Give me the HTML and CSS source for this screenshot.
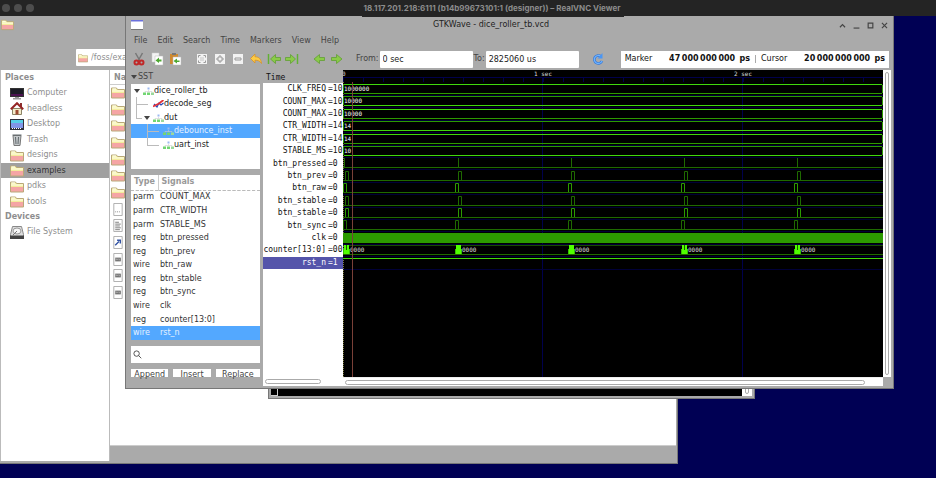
FILE: index.html
```html
<!DOCTYPE html>
<html lang="en">
<head>
<meta charset="utf-8">
<title>18.117.201.218:6111 (b14b99673101:1 (designer)) – RealVNC Viewer</title>
<link rel="stylesheet" href="styles.css">
</head>
<body>
<svg class="defs" aria-hidden="true">
  <defs>
    <linearGradient id="foldFill" x1="0" y1="0" x2="0" y2="1"><stop offset=".2" stop-color="#f6f3a0"/><stop offset=".45" stop-color="#f4ec9c"/><stop offset=".55" stop-color="#f5a5a5"/><stop offset="1" stop-color="#f5a5a5"/></linearGradient>
    <symbol id="folder" viewBox="0 0 14 12"><path d="M.5 1.500h5l1 1.500h7v8.500h-13z" fill="url(#foldFill)" stroke="#b9a878"/><path d="M1.500 2.500h3.500" stroke="#fff"/><path d="M1 4.500h12" stroke="#fffef0"/></symbol>
    <symbol id="computer" viewBox="0 0 14 13"><path d="M0 1h14v9H0z" fill="#333"/><path d="M1 2h12v5H1z" fill="#1c1c26"/><path d="M1 7h12v2H1z" fill="#4b1350"/><path d="M5 10h4v1h2v1.500H3V11h2z" fill="#999"/></symbol>
    <symbol id="home" viewBox="0 0 14 13"><path d="M2.500 6.500h9v6h-9z" fill="#f3eccb" stroke="#8c8466"/><path d="M10 1h2v4h-2z" fill="#8c3030"/><path d="M.8 7.200 7 1.200l6.200 6" fill="none" stroke="#952525" stroke-width="2"/><path d="M5.500 8h3v4.500h-3z" fill="#9c4a32"/></symbol>
    <symbol id="desk" viewBox="0 0 14 13"><path d="M0 1h14v11H0z" fill="#30303c"/><path d="M1 2h12v5H1z" fill="#58d0e8"/><path d="M1 5h12v5H1z" fill="#8296e8"/><path d="M2 10.500h10" stroke="#fff" stroke-dasharray="1 1"/></symbol>
    <symbol id="trash" viewBox="0 0 14 13"><path d="M3 2.500h8l-1 10H4z" fill="#c4c8ca" stroke="#777"/><path d="M2.500 2h9M5.500 4l.5 7M8.500 4 8 11" stroke="#60686c" fill="none"/></symbol>
    <symbol id="drive" viewBox="0 0 14 13"><path d="M2.500.5h9l2 8v4H.5v-4z" fill="#ddd" stroke="#888"/><path d="M0 9.500h14V13H0z" fill="#444"/><ellipse cx="7" cy="5" rx="4" ry="3" fill="#f8f8f8" stroke="#999"/><path d="M7 5 3 9" stroke="#777"/></symbol>
    <symbol id="hier" viewBox="0 0 11 8"><path d="M4.500.5h2v2h-2z" fill="#9bb8f0"/><path d="M5.500 3v1.500M2 5.500V4.500h7v1" stroke="#ccc" fill="none" stroke-width=".6"/><path d="M0 5.500h3V8H0zM4 5.500h3V8H4z" fill="#72d672"/><path d="M8 5.500h3V8H8z" fill="#9bd89b"/></symbol>
    <symbol id="fn" viewBox="0 0 11 8"><path d="M1 4l3 3 2-4 2 2 2.500-2" fill="none" stroke="#2848b8" stroke-width="1.200"/><path d="M0 6.500 3 5l3-1.500L10.500 0" fill="none" stroke="#e03038" stroke-width="1.800"/></symbol>
    <symbol id="arrowR" viewBox="0 0 14 12"><path d="M1.500 4.500h5V1.500L12 6l-5.500 4.500v-3h-5z" fill="#8acb48" stroke="#62a034" stroke-width=".8"/></symbol>
    <symbol id="arrowEnd" viewBox="0 0 14 12"><path d="M.5 4.500h5V1.500l5 4.500-5 4.500v-3h-5z" fill="#8acb48" stroke="#62a034" stroke-width=".8"/><path d="M12.500 1v10" stroke="#62b034" stroke-width="1.500"/></symbol>
  </defs>
</svg>

<header class="viewer-bar">
  <span class="dots"><i></i><i></i><i></i></span>
  <h1>18.117.201.218:6111 (b14b99673101:1 (designer)) – RealVNC Viewer</h1>
</header>

<main class="desktop">
  <section class="win files" aria-label="File manager">
    <div class="files-head">
      <svg class="ic-folder"><use href="#folder"/></svg>
      <label class="path"><svg class="ic-path"><use href="#folder"/></svg><input type="text" value="/foss/examples" aria-label="Path"></label>
    </div>
    <div class="files-body">
      <nav class="places">
        <h2>Places</h2>
        <a href="#"><svg><use href="#computer"/></svg>Computer</a>
        <a href="#"><svg><use href="#home"/></svg>headless</a>
        <a href="#"><svg><use href="#desk"/></svg>Desktop</a>
        <a href="#"><svg><use href="#trash"/></svg>Trash</a>
        <a href="#"><svg><use href="#folder"/></svg>designs</a>
        <a href="#" class="current"><svg><use href="#folder"/></svg>examples</a>
        <a href="#"><svg><use href="#folder"/></svg>pdks</a>
        <a href="#"><svg><use href="#folder"/></svg>tools</a>
        <h2>Devices</h2>
        <a href="#"><svg><use href="#drive"/></svg>File System</a>
      </nav>
      <div class="listing">
        <div class="listing-head">Na</div>
        <div class="listing-items">
          <svg><use href="#folder"/></svg>
          <svg><use href="#folder"/></svg>
          <svg><use href="#folder"/></svg>
          <svg><use href="#folder"/></svg>
          <svg><use href="#folder"/></svg>
          <svg><use href="#folder"/></svg>
          <svg><use href="#folder"/></svg>
          <svg viewBox="0 0 14 14"><path d="M2.500.5h9v13h-9z" class="page"/><path d="M4 9.500h6" stroke="#888" stroke-dasharray="1 1"/></svg>
          <svg viewBox="0 0 14 14"><path d="M2.500.5h9v13h-9z" class="page"/><path d="M4 3.500h4M4 5.500h6M4 7.500h5M4 9.500h6M4 11.500h5" stroke="#777"/></svg>
          <svg viewBox="0 0 14 14"><path d="M2.500.5h9v13h-9z" class="page"/><path d="M4 10l4-4M6 4.500h3.500V8" stroke="#3454a4" stroke-width="1.500" fill="none"/></svg>
          <svg viewBox="0 0 14 14"><path d="M2.500.5h9v13h-9z" class="page"/><path d="M4 5h6v4H4z" fill="#666"/><path d="M5 8V6l1 1 1-1v2M8.500 6v2" stroke="#ddd" fill="none" stroke-width=".6"/></svg>
          <svg viewBox="0 0 14 14"><path d="M2.500.5h9v13h-9z" class="page"/><path d="M4 5h6v4H4z" fill="#666"/><path d="M5 8V6l1 1 1-1v2M8.500 6v2" stroke="#ddd" fill="none" stroke-width=".6"/></svg>
          <svg viewBox="0 0 14 14"><path d="M2.500.5h9v13h-9z" class="page"/><path d="M4 5h6v4H4z" fill="#666"/><path d="M5 8V6l1 1 1-1v2M8.500 6v2" stroke="#ddd" fill="none" stroke-width=".6"/></svg>
        </div>
      </div>
    </div>
  </section>

  <section class="win terminal" aria-label="Terminal"><span class="cursor"></span><span class="term-scroll"><i></i></span></section>

  <section class="win wave" aria-label="GTKWave">
    <div class="titlebar">
      <svg class="ic-app" viewBox="0 0 12 10"><path d="M0 0h12v10H0z" fill="#fff"/><path d="M0 0h12v1.500H0z" fill="#6a70dc"/><path d="M0 9.500h12" stroke="#777"/></svg>
      <h2>GTKWave - dice_roller_tb.vcd</h2>
      <span class="controls">
        <button aria-label="Shade"><svg viewBox="0 0 6 6"><path d="M.8 4.500 3 2.200l2.200 2.300"/></svg></button>
        <button aria-label="Minimize"><svg viewBox="0 0 6 6"><path d="M.5 5.200h5"/></svg></button>
        <button aria-label="Maximize"><svg viewBox="0 0 6 6"><path d="M1 1h4v4H1z"/></svg></button>
        <button aria-label="Close"><svg viewBox="0 0 6 6"><path d="m.8.8 4.400 4.400m0-4.400L.8 5.200"/></svg></button>
      </span>
    </div>
    <nav class="menubar"><button>File</button><button>Edit</button><button>Search</button><button>Time</button><button>Markers</button><button>View</button><button>Help</button></nav>
    <div class="toolbar">
      <div class="tools">
        <button aria-label="Cut"><svg viewBox="0 0 14 14"><path d="M3.500 1 8 9M10.500 1 6 9" stroke="#777" stroke-width="1.500"/><circle cx="4.500" cy="10.500" r="2" class="blade"/><circle cx="9.500" cy="10.500" r="2" class="blade"/></svg></button>
        <button aria-label="Copy"><svg viewBox="0 0 14 14"><path d="M2 1h7v9H2z" fill="#f4f4f4" stroke="#ccc" stroke-width=".5"/><path d="M5 4h8v9H5z" fill="#fff" stroke="#bbb" stroke-width=".5"/><path d="M11.500 7.500H9V5.500L5.500 8.500 9 11V9.500h2.500z" fill="#4ea832"/></svg></button>
        <button aria-label="Paste"><svg viewBox="0 0 14 14"><path d="M2 2h8v10H2z" fill="#cf8a30"/><path d="M4 1h4v2H4z" fill="#777"/><path d="M5 5h8v8H5z" fill="#fff" stroke="#bbb" stroke-width=".5"/><path d="M11.500 8.500H9v-2L5.500 9 9 11.500v-1.500h2.500z" fill="#4ea832"/></svg></button>
      </div>
      <div class="tools">
        <button aria-label="Zoom fit"><svg viewBox="0 0 14 14"><path d="M2 2h10v10H2z" fill="#f2f2f2"/><path d="M3.500 5.500v-2h2M8.500 3.500h2v2M10.500 8.500v2h-2M5.500 10.500h-2v-2" class="dash"/><path d="M5.500 6h1M7.500 6h1M5.500 8h1M7.500 8h1" class="dash"/></svg></button>
        <button aria-label="Zoom in"><svg viewBox="0 0 14 14"><path d="M2 2h10v10H2z" fill="#f2f2f2"/><path d="M6 4h2v2h2v2H8v2H6V8H4V6h2z" class="dash"/></svg></button>
        <button aria-label="Zoom out"><svg viewBox="0 0 14 14"><path d="M2 2h10v10H2z" fill="#f2f2f2"/><path d="M4 6h6v2H4z" class="dash"/></svg></button>
        <button aria-label="Undo zoom"><svg viewBox="0 0 14 14"><path d="M1.500 6.500 6 2v2.800c4 0 6 2 6.500 6.700C11 9 9 8.200 6 8.200V11z" fill="#fccb45" stroke="#d8922a" stroke-width=".8"/></svg></button>
        <button aria-label="To start"><svg class="flip"><use href="#arrowEnd"/></svg></button>
        <button aria-label="To end"><svg><use href="#arrowEnd"/></svg></button>
      </div>
      <div class="tools">
        <button aria-label="Previous edge"><svg class="flip"><use href="#arrowR"/></svg></button>
        <button aria-label="Next edge"><svg><use href="#arrowR"/></svg></button>
      </div>
      <div class="range">
        <label for="from">From:</label><input id="from" type="text" value="0 sec">
        <label for="to">To:</label><input id="to" type="text" value="2825060 us">
      </div>
      <button class="reload" aria-label="Reload"><svg viewBox="0 0 14 14"><path d="M10 4.500A4 4 0 1 0 11 9" fill="none" stroke="#3578d8" stroke-width="2.600"/><path d="M10 4.500A4 4 0 1 0 11 9" fill="none" stroke="#70b4ff" stroke-width="1.200"/><path d="M11.500 1v5.500H6.500z" fill="#4a96f4"/></svg></button>
      <div class="readout"><span>Marker</span><b>47&#8201;000&#8201;000&#8201;000 &#8201;ps</b><i></i><span>Cursor</span><b>20&#8201;000&#8201;000&#8201;000 &#8201;ps</b></div>
    </div>

    <div class="panes">
      <aside class="side">
        <div class="sst"><span class="tri"></span>SST</div>
        <ul class="tree">
          <li><span class="tri"></span><svg><use href="#hier"/></svg>dice_roller_tb</li>
          <li class="d1 leaf"><svg><use href="#fn"/></svg>decode_seg</li>
          <li class="d1 open"><span class="tri"></span><svg><use href="#hier"/></svg>dut</li>
          <li class="d2 leaf selected"><svg><use href="#hier"/></svg>debounce_inst</li>
          <li class="d2 leaf last"><svg><use href="#hier"/></svg>uart_inst</li>
        </ul>
        <table class="signals">
          <thead><tr><th>Type</th><th>Signals</th></tr></thead>
          <tbody>
            <tr><td>parm</td><td>COUNT_MAX</td></tr>
            <tr><td>parm</td><td>CTR_WIDTH</td></tr>
            <tr><td>parm</td><td>STABLE_MS</td></tr>
            <tr><td>reg</td><td>btn_pressed</td></tr>
            <tr><td>reg</td><td>btn_prev</td></tr>
            <tr><td>wire</td><td>btn_raw</td></tr>
            <tr><td>reg</td><td>btn_stable</td></tr>
            <tr><td>reg</td><td>btn_sync</td></tr>
            <tr><td>wire</td><td>clk</td></tr>
            <tr><td>reg</td><td>counter[13:0]</td></tr>
            <tr class="selected"><td>wire</td><td>rst_n</td></tr>
          </tbody>
        </table>
        <label class="search"><svg viewBox="0 0 10 10"><circle cx="4" cy="4" r="3"/><path d="m6.200 6.200 3 3"/></svg><input type="text" aria-label="Filter signals"></label>
        <div class="actions"><button>Append</button><button>Insert</button><button>Replace</button></div>
      </aside>

      <div class="names">
        <div class="names-head">Time</div>
        <ol>
          <li><span>CLK_FREQ</span><span>=10</span></li>
          <li><span>COUNT_MAX</span><span>=10</span></li>
          <li><span>COUNT_MAX</span><span>=10</span></li>
          <li><span>CTR_WIDTH</span><span>=14</span></li>
          <li><span>CTR_WIDTH</span><span>=14</span></li>
          <li><span>STABLE_MS</span><span>=10</span></li>
          <li><span>btn_pressed</span><span>=0</span></li>
          <li><span>btn_prev</span><span>=0</span></li>
          <li><span>btn_raw</span><span>=0</span></li>
          <li><span>btn_stable</span><span>=0</span></li>
          <li><span>btn_stable</span><span>=0</span></li>
          <li><span>btn_sync</span><span>=0</span></li>
          <li><span>clk</span><span>=0</span></li>
          <li><span>counter[13:0]</span><span>=00</span></li>
          <li class="selected"><span>rst_n</span><span>=1</span></li>
        </ol>
        <div class="hscroll short"><i></i></div>
      </div>

      <div class="plot">
        <svg id="waves" role="img" aria-label="Waveforms"></svg>
        <div class="vscroll"><i></i></div>
        <div class="hscroll"><i></i></div>
      </div>
    </div>
  </section>
</main>
<script src="script.js"></script>
</body>
</html>
```

FILE: styles.css
```css
* { box-sizing: border-box; }
body { margin: 0; height: 100vh; display: flex; flex-direction: column; overflow: hidden; font: 8px/12px "DejaVu Sans", sans-serif; color: #333; background: #000054; }
h1, h2, ul, ol { margin: 0; padding: 0; list-style: none; font-size: inherit; }
button, input { font: inherit; color: inherit; border: 0; padding: 0; margin: 0; background: none; min-width: 0; }
a { color: inherit; text-decoration: none; }
svg { display: block; flex: none; }
.defs { position: absolute; width: 0; height: 0; }

.viewer-bar { flex: none; height: 16px; display: grid; grid-template-columns: 1fr auto 1fr; align-items: center; background: #242424; color: #8c8c8c; }
.viewer-bar h1 { grid-column: 2; margin-left: 48px; font: 700 8px/14px Inter, sans-serif; }
.dots { display: flex; gap: 4px; padding-left: 2px; }
.dots i { width: 8px; height: 8px; border-radius: 50%; background: #4d4d4d; }
.desktop { flex: 1; position: relative; }
.win { position: absolute; background: #aaa; border: solid #777; border-width: 0 1px 1px 0; }

/* File manager */
.files { left: 0; right: 258px; top: 0; bottom: 14px; display: flex; flex-direction: column; color: #8e8e8e; }
.files-head { height: 54px; padding: 2px 0 0 1px; display: flex; flex-direction: column; gap: 18px; }
.ic-folder { width: 13px; height: 13px; }
.path { flex: none; margin-left: 75px; width: 200px; height: 17px; display: flex; align-items: center; gap: 3px; padding-left: 2px; background: #fff; border-radius: 1px; }
.ic-path { width: 10px; height: 10px; }
.files-body { flex: 1; display: flex; min-height: 0; }
.places { width: 110px; margin-bottom: 2px; border: solid #bbb; border-width: 0 1px; background: #fff; }
.places h2, .places a { height: 15px; display: flex; align-items: center; padding-left: 4px; }
.places a { height: 16px; gap: 3px; padding-left: 9px; }
.places a:nth-of-type(2n) { height: 15px; }
.places svg { width: 14px; height: 13px; }
.places .current { background: #a0a0a0; color: #333; }
.listing { flex: 1; margin: 0 1px 17px 0; background: #fff; border-bottom: 1px solid #ccc; }
.listing-head { height: 15px; padding: 2px 4px; font-weight: bold; border-bottom: 1px solid #ccc; }
.listing-items { height: 214px; padding-left: 1px; display: flex; flex-direction: column; justify-content: space-between; }
.listing-items svg { width: 14px; height: 13px; margin-top: 1px; }
.page { fill: #fff; stroke: #aaa; }

/* Terminal, mostly covered */
.terminal { left: 268px; right: 181px; top: 340px; height: 43px; padding: 0 2px 2px; border-left-width: 1px; display: flex; justify-content: space-between; }
.terminal::before { content: ""; order: 1; flex: 1; background: #000; }
.cursor { width: 7px; background: #000; border: solid #ccc; border-width: 0 1px 1px 0; }
.term-scroll { order: 2; width: 10px; background: #fff; padding: 0 3px 2px; display: flex; }
.term-scroll i { flex: 1; border: 1px solid #aaa; border-radius: 2px; }

/* Waveform viewer */
.wave { left: 125px; right: 42px; top: 0; bottom: 89px; padding: 0 2px 2px 5px; display: flex; flex-direction: column; border-left-width: 1px; color: #444; }
.wave::after { content: ""; position: absolute; top: 0; left: 236px; width: 262px; height: 1px; background: #242424; }
.titlebar { height: 18px; padding-right: 2px; display: grid; grid-template-columns: 12px 1fr 50px; align-items: center; }
.titlebar h2 { text-align: center; font-weight: normal; color: #222; }
.ic-app { width: 12px; height: 10px; }
.controls { display: flex; gap: 7px; }
.controls svg { width: 7px; height: 7px; fill: none; stroke: #444; }
.menubar { height: 14px; display: flex; gap: 10px; padding-left: 3px; }
.toolbar { height: 22px; display: flex; align-items: center; }
.tools { display: flex; gap: 4px; margin: 0 12px 0 1px; }
.tools svg, .reload svg { width: 14px; height: 14px; }
.flip { transform: scaleX(-1); }
.blade { fill: none; stroke: #c02828; stroke-width: 2; }
.dash { fill: none; stroke: #999; stroke-width: 1; }
.range { display: flex; align-items: center; gap: 1px; }
.range input { width: 93px; height: 17px; padding: 0 3px; background: #fff; border-radius: 1px; color: #222; }
.reload { margin: 0 16px 0 12px; }
.readout { flex: 1; height: 17px; margin-right: 2px; padding: 0 4px; display: flex; align-items: center; background: #fff; color: #111; white-space: pre; }
.readout b { margin-left: auto; }
.readout i { width: 1px; height: 8px; margin: 0 5px; background: #aaa; }
.panes { flex: 1; display: flex; min-height: 0; }

.side { width: 129px; margin-right: 3px; display: flex; flex-direction: column; }
.sst { height: 14px; display: flex; align-items: center; gap: 1px; }
.tri { width: 6px; border: 3px solid transparent; border-top: 4px solid #444; border-bottom: 0; }
.tree { height: 85px; background: #fff; color: #222; }
.tree li { position: relative; height: 13px; display: flex; align-items: center; padding-left: 3px; }
.tree li:nth-child(2n) { height: 14px; }
.tree svg { width: 11px; height: 8px; }
.tree .tri { margin-right: 3px; }
.tree .d1.leaf { padding-left: 22px; }
.tree .d1.open { padding-left: 13px; }
.tree .d2 { padding-left: 32px; }
.tree .leaf::before, .tree .open::before { content: ""; position: absolute; left: 5px; top: 0; width: 11px; height: 7px; border: solid #bbb; border-width: 0 0 1px 1px; }
.tree .leaf::after { content: ""; position: absolute; left: 5px; top: 0; width: 1px; height: 100%; background: #bbb; }
.tree .open::before { width: 5px; }
.tree .d2::before, .tree .d2::after { left: 16px; }
.tree .last::after { display: none; }
.selected { background: #53a8ff; color: #e4f1ff; }
.tree .selected { color: #e4f1ff; }
.signals { margin-top: 6px; width: 100%; height: 165px; border-collapse: collapse; table-layout: fixed; background: #fff; color: #333; }
.signals th, .signals td { padding: 0 0 0 2px; text-align: left; line-height: 12px; }
.signals th { height: 15px; padding-left: 3px; color: #999; border-bottom: 1px dashed #bbb; }
.signals th:first-child { width: 27px; border-right: 1px solid #ccc; }
.signals .selected { color: #e4f1ff; }
.search { height: 17px; margin-top: 6px; padding-left: 2px; display: flex; align-items: center; gap: 3px; background: #fff; }
.search svg { width: 9px; height: 9px; fill: none; stroke: #444; }
.search input { flex: 1; }
.actions { display: flex; gap: 5px; margin-top: 6px; }
.actions button { flex: 38 1 0; height: 8px; line-height: 12px; background: #fff; }
.actions button:last-child { flex-grow: 45; }

.names { width: 80px; display: flex; flex-direction: column; background: #fff; font-family: "DejaVu Sans Mono", monospace; color: #111; overflow: hidden; }
.names-head { height: 13px; padding: 2px 3px 0; background: #aaa; }
.names ol { height: 186px; display: grid; grid-template-rows: repeat(15, 1fr); }
.names li { display: grid; grid-template-columns: 63px 1fr; column-gap: 2px; align-items: center; line-height: 12px; white-space: pre; }
.names li span:first-child { justify-self: end; }
.names .selected { background: #5454aa; color: #fff; }
.names .hscroll { margin-top: auto; }
.hscroll { height: 9px; padding: 2px 18px 2px 2px; background: #fff; border-top: 1px solid #eee; }
.hscroll i { display: block; height: 5px; border: 1px solid #aaa; border-radius: 3px; background: #fff; }
.short { padding-right: 22px; border-top: 0; }
.plot { flex: 1; display: grid; grid-template-columns: 1fr 8px; grid-template-rows: 1fr 9px; }
#waves { width: 100%; height: 100%; background: #000; font: 6px "DejaVu Sans Mono", monospace; }
.vscroll { padding: 2px; background: #fff; display: flex; }
.vscroll i { flex: 1; border: 1px solid #aaa; border-radius: 3px; }
```

FILE: script.js
```js
const svg = document.getElementById('waves');
const NS = 'http://www.w3.org/2000/svg';

function add(tag, attrs, text) {
  const node = document.createElementNS(NS, tag);
  for (const key in attrs) node.setAttribute(key, attrs[key]);
  if (text) node.textContent = text;
  svg.appendChild(node);
}
function rect(x, y, width, height, fill) {
  add('rect', { x, y, width, height, fill });
}

const W = svg.clientWidth;
const H = svg.clientHeight;
const PITCH = 186 / 15;
const FIRST = 14;
const SEC = 200;
const PERIOD = 113;
const NAVY = '#00004c';
const DIM = '#1f6a00';
const MID = '#2c9a00';
const BRIGHT = '#40d80c';

// Time ruler
rect(0, 7, W, 1, NAVY);
for (let x = 0; x < W; x += 20) rect(x, 8, 1, 4, NAVY);
for (let x = SEC; x < W; x += SEC) {
  rect(x - 1, 8, 1, H, NAVY);
  add('text', { x, y: 6, fill: '#ddd', 'text-anchor': 'middle' }, x / SEC + ' sec');
}
add('text', { x: -1, y: 6, fill: '#ddd' }, '0');
for (let y = 12; y < H; y += 2) rect(0, y, 1, 1, '#777740');

const rows = [
  { bus: '1000000' }, { bus: '10000' }, { bus: '10000' }, { bus: '14' }, { bus: '14' }, { bus: '10' },
  { spike: true }, { pulse: 2 }, { pulse: -1 }, { pulse: 2 }, { pulse: 2 }, { pulse: -1 },
  { clock: true }, { counter: true }, { high: true }
];

rows.forEach((row, i) => {
  const top = Math.round(FIRST + PITCH * i);
  const low = top + 9;
  rect(0, low + 2, W, 1, '#000038');
  if (row.bus) {
    rect(1, top, W - 2, 1, i % 2 ? MID : BRIGHT);
    rect(1, low, W - 2, 1, i % 2 ? BRIGHT : MID);
    rect(0, top + 1, 1, 8, MID);
    rect(W - 1, top + 1, 1, 8, MID);
    add('text', { x: 1, y: top + 7, fill: '#fff' }, row.bus);
  } else if (row.clock) {
    rect(0, top, W, 10, MID);
  } else if (row.high) {
    rect(0, top, W, 1, BRIGHT);
  } else if (row.counter) {
    rect(0, top, W, 1, '#174c00');
    rect(0, low, W, 1, DIM);
    for (let n = 0; n < 5; n++) {
      const x = n ? PERIOD * n : 1;
      rect(x - 1, top + 4, 7, 5, '#38c000');
      rect(x, top, 5, 9, '#50ff00');
      if (n !== 1 && n !== 2) rect(x + 2, top, 1, 5, '#1a5a00');
      add('text', { x: x + 6, y: top + 7, fill: '#ddd' }, '0000');
    }
  } else {
    rect(0, low, W, 1, DIM);
    for (let n = 0; n < 5; n++) {
      if (row.spike) {
        rect(n ? PERIOD * n + 2 : 1, top, 1, 9, DIM);
        continue;
      }
      const x = n ? PERIOD * n + row.pulse : Math.max(row.pulse, 0);
      add('path', { d: `M${x + .5} ${low}V${top + .5}h3V${low}`, fill: '#000', stroke: i % 2 ? DIM : MID });
    }
  }
});

// Primary marker
rect(9, 12, 1, H - 12, '#7a4038');
```
